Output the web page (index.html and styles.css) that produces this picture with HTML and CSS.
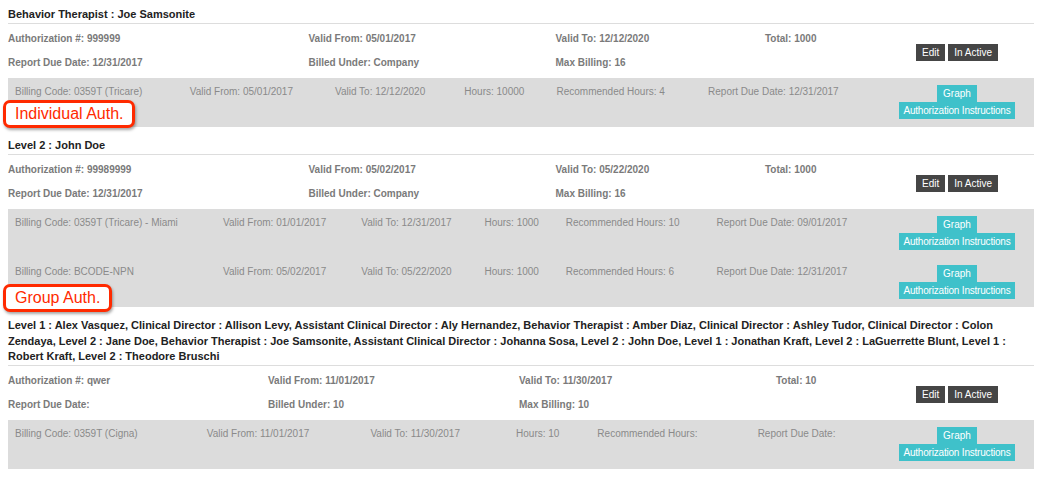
FILE: index.html
```html
<!DOCTYPE html>
<html lang="en">
<head>
<meta charset="utf-8">
<title>Authorizations</title>
<link rel="stylesheet" href="styles.css">
</head>
<body>
<div class="page">

  <section class="auth">
    <h3 class="auth-title">Behavior Therapist : Joe Samsonite</h3>
    <table class="auth-head">
      <tr>
        <td>Authorization #: 999999</td>
        <td>Valid From: 05/01/2017</td>
        <td>Valid To: 12/12/2020</td>
        <td>Total: 1000</td>
        <td class="actions" rowspan="2"><span class="btn dark">Edit</span><span class="btn dark">In Active</span></td>
      </tr>
      <tr>
        <td>Report Due Date: 12/31/2017</td>
        <td>Billed Under: Company</td>
        <td>Max Billing: 16</td>
        <td></td>
      </tr>
    </table>
    <table class="billing">
      <tr>
        <td>Billing Code: 0359T (Tricare)</td>
        <td>Valid From: 05/01/2017</td>
        <td>Valid To: 12/12/2020</td>
        <td>Hours: 10000</td>
        <td>Recommended Hours: 4</td>
        <td>Report Due Date: 12/31/2017</td>
        <td class="tools"><span class="btn teal graph">Graph</span><span class="btn teal instr">Authorization Instructions</span></td>
      </tr>
    </table>
  </section>

  <section class="auth">
    <h3 class="auth-title">Level 2 : John Doe</h3>
    <table class="auth-head">
      <tr>
        <td>Authorization #: 99989999</td>
        <td>Valid From: 05/02/2017</td>
        <td>Valid To: 05/22/2020</td>
        <td>Total: 1000</td>
        <td class="actions" rowspan="2"><span class="btn dark">Edit</span><span class="btn dark">In Active</span></td>
      </tr>
      <tr>
        <td>Report Due Date: 12/31/2017</td>
        <td>Billed Under: Company</td>
        <td>Max Billing: 16</td>
        <td></td>
      </tr>
    </table>
    <table class="billing">
      <tr>
        <td>Billing Code: 0359T (Tricare) - Miami</td>
        <td>Valid From: 01/01/2017</td>
        <td>Valid To: 12/31/2017</td>
        <td>Hours: 1000</td>
        <td>Recommended Hours: 10</td>
        <td>Report Due Date: 09/01/2017</td>
        <td class="tools"><span class="btn teal graph">Graph</span><span class="btn teal instr">Authorization Instructions</span></td>
      </tr>
      <tr>
        <td>Billing Code: BCODE-NPN</td>
        <td>Valid From: 05/02/2017</td>
        <td>Valid To: 05/22/2020</td>
        <td>Hours: 1000</td>
        <td>Recommended Hours: 6</td>
        <td>Report Due Date: 12/31/2017</td>
        <td class="tools"><span class="btn teal graph">Graph</span><span class="btn teal instr">Authorization Instructions</span></td>
      </tr>
    </table>
  </section>

  <section class="auth">
    <h3 class="auth-title">Level 1 : Alex Vasquez, Clinical Director : Allison Levy, Assistant Clinical Director : Aly Hernandez, Behavior Therapist : Amber Diaz, Clinical Director : Ashley Tudor, Clinical Director : Colon Zendaya, Level 2 : Jane Doe, Behavior Therapist : Joe Samsonite, Assistant Clinical Director : Johanna Sosa, Level 2 : John Doe, Level 1 : Jonathan Kraft, Level 2 : LaGuerrette Blunt, Level 1 : Robert Kraft, Level 2 : Theodore Bruschi</h3>
    <table class="auth-head auth-head--group">
      <tr>
        <td>Authorization #: qwer</td>
        <td>Valid From: 11/01/2017</td>
        <td>Valid To: 11/30/2017</td>
        <td>Total: 10</td>
        <td class="actions" rowspan="2"><span class="btn dark">Edit</span><span class="btn dark">In Active</span></td>
      </tr>
      <tr>
        <td>Report Due Date:</td>
        <td>Billed Under: 10</td>
        <td>Max Billing: 10</td>
        <td></td>
      </tr>
    </table>
    <table class="billing">
      <tr>
        <td>Billing Code: 0359T (Cigna)</td>
        <td>Valid From: 11/01/2017</td>
        <td>Valid To: 11/30/2017</td>
        <td>Hours: 10</td>
        <td>Recommended Hours:</td>
        <td>Report Due Date:</td>
        <td class="tools"><span class="btn teal graph">Graph</span><span class="btn teal instr">Authorization Instructions</span></td>
      </tr>
    </table>
  </section>

  <div class="callout callout-individual">Individual Auth.</div>
  <div class="callout callout-group">Group Auth.</div>
</div>
</body>
</html>
```

FILE: styles.css
```css
* { box-sizing: border-box; }

html, body {
  margin: 0;
  padding: 0;
  background: #ffffff;
}

body {
  font-family: "Liberation Sans", Arial, Helvetica, sans-serif;
  font-size: 10px;
  color: #777777;
}

.page {
  position: relative;
  padding: 7px 6px 0 8px;
}

.auth + .auth {
  margin-top: 11.5px;
}

.auth-title {
  margin: 0;
  font-size: 11px;
  font-weight: bold;
  line-height: 15.5px;
  color: #222222;
  border-bottom: 1px solid #dddddd;
}

.auth-head {
  width: 100%;
  border-collapse: collapse;
  margin: 3px 0 3px;
}

.auth-head td {
  padding: 0;
  height: 24px;
  line-height: 24px;
  font-weight: bold;
  color: #7a7a7a;
  white-space: nowrap;
  vertical-align: middle;
}

.auth-head--group td:nth-child(1) { width: 260px; }
.auth-head--group td:nth-child(2) { width: 251px; }
.auth-head--group td:nth-child(3) { width: 257px; }

.auth-head td.actions {
  width: 154px;
  text-align: center;
  padding-top: 5px;
}

.btn {
  display: inline-block;
  height: 17px;
  line-height: 17px;
  padding: 0 6px;
  font-size: 10px;
  font-weight: normal;
  color: #ffffff;
  white-space: nowrap;
}

.btn.dark {
  background: #454545;
  margin: 0 1.5px;
}

.btn.teal {
  display: block;
  width: max-content;
  margin: 0 auto;
  background: #3fc1ca;
}

.btn.instr {
  padding: 0 4px;
  letter-spacing: -0.2px;
}

.billing {
  width: 100%;
  border-collapse: collapse;
  background: #dcdcdc;
}

.billing td {
  padding: 7px 8px 7px 7px;
  height: 49px;
  line-height: 14px;
  vertical-align: top;
  color: #8a8a8a;
  white-space: nowrap;
}

.billing td.tools {
  width: 154px;
  padding: 7px 0;
  text-align: center;
}

.callout {
  position: absolute;
  left: 3px;
  height: 28px;
  padding: 0 9px;
  line-height: 22px;
  font-size: 16px;
  color: #ff2a00;
  background: #ffffff;
  border: 3px solid #ff2a00;
  border-radius: 7px;
  box-shadow: 1px 2px 3px rgba(0, 0, 0, 0.35);
  white-space: nowrap;
}

.callout-individual {
  top: 100px;
  width: 132px;
}

.callout-group {
  top: 284px;
  width: 109px;
}
```
